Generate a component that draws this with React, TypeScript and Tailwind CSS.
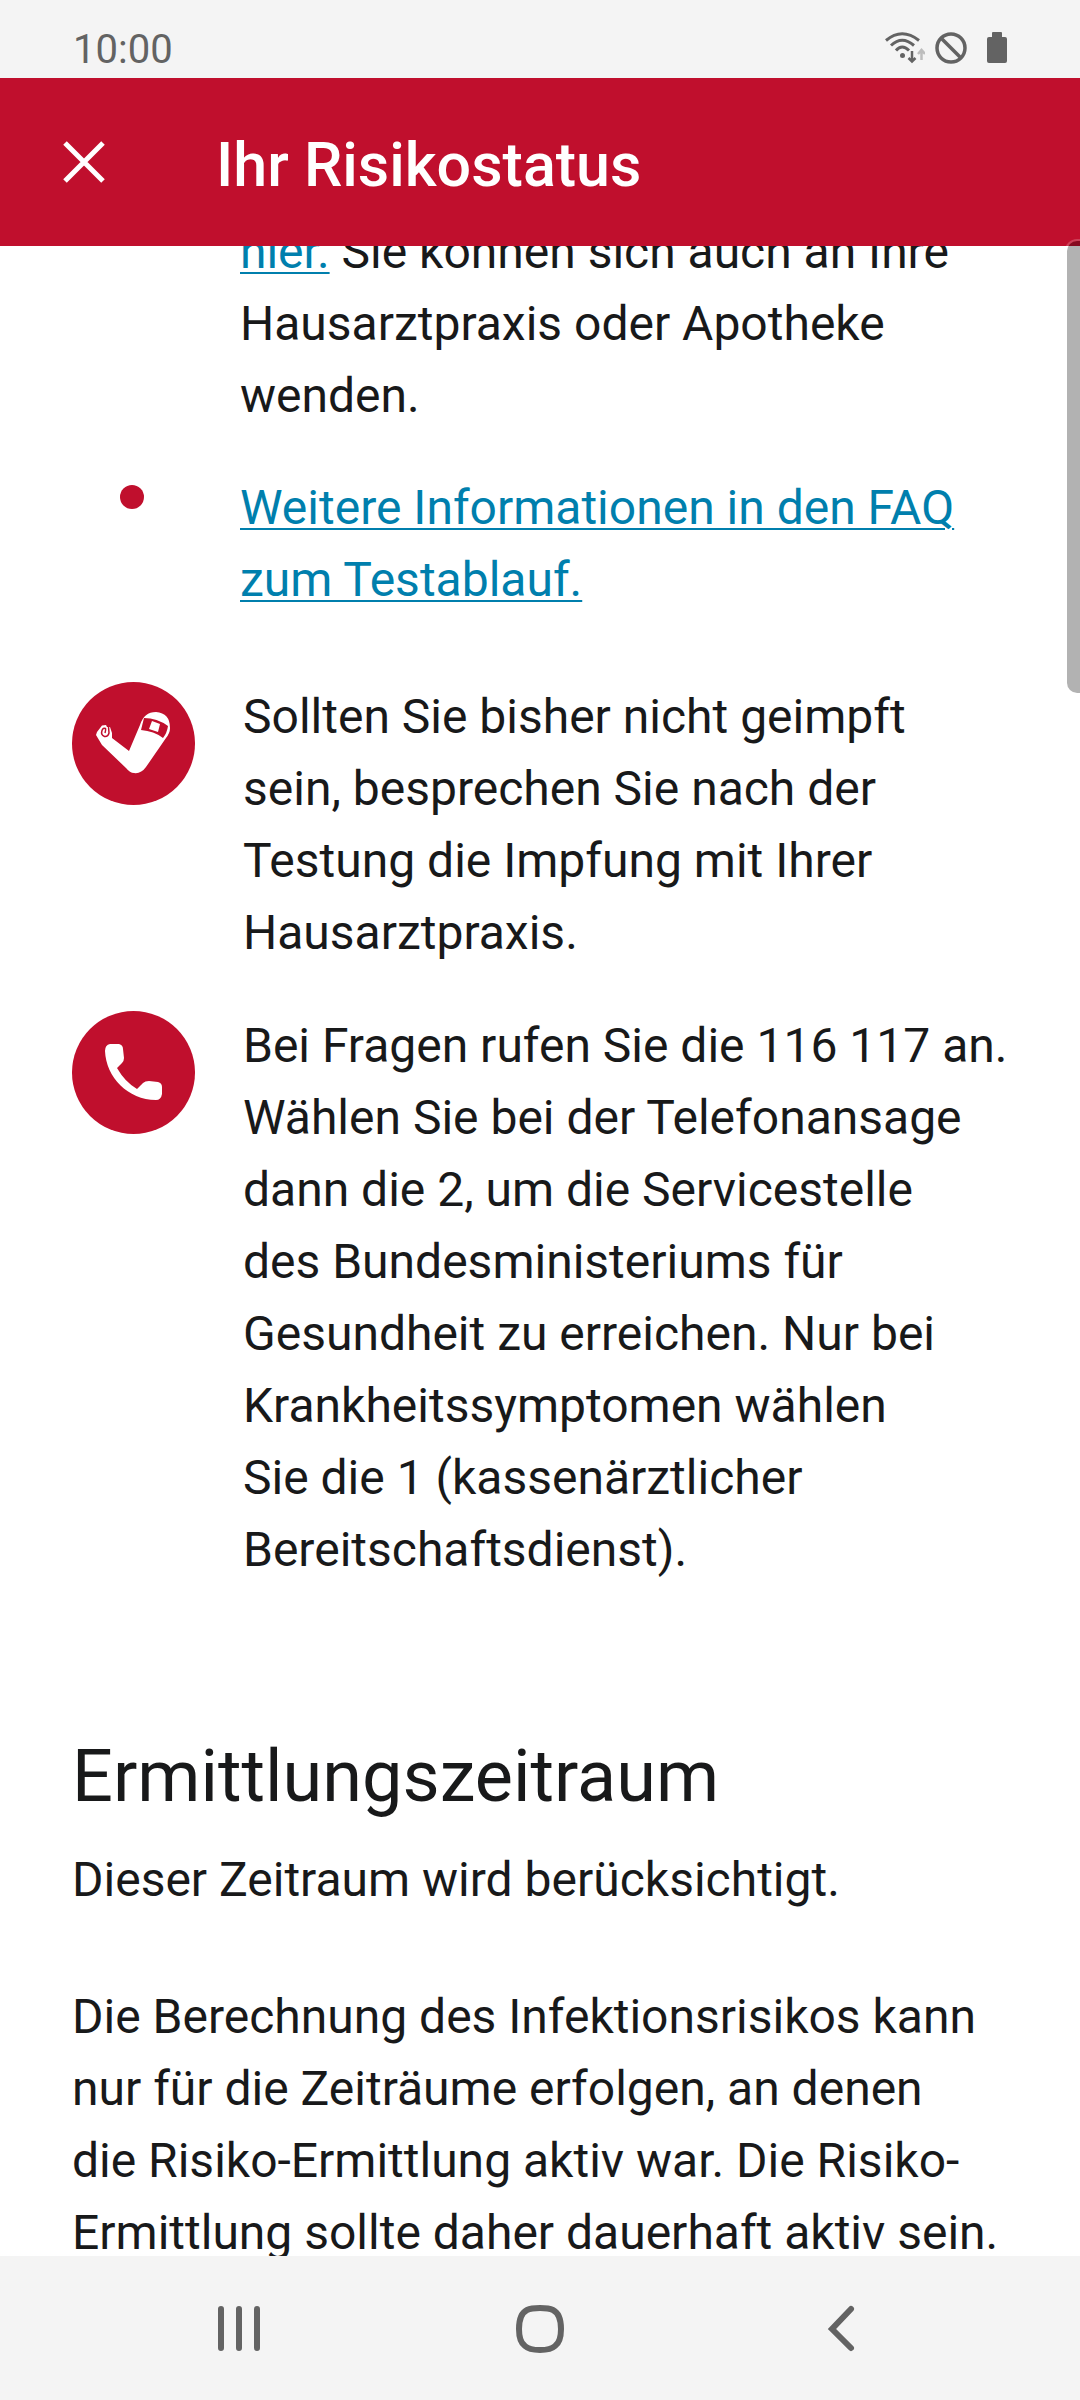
import React, { Fragment } from "react";

function Lines({ lines }: { lines: string[] }) {
  return (
    <>
      {lines.map((line, i) => (
        <Fragment key={line}>
          {i > 0 && <br />}
          {line}
        </Fragment>
      ))}
    </>
  );
}

function StatusBar() {
  return (
    <div className="flex h-[78px] shrink-0 items-end justify-between bg-[#f4f4f4] pr-[61px] pl-[73px] text-[#636363]">
      <span className="pb-1 text-[40px] leading-[48px]">10:00</span>
      <div className="flex items-end gap-2 pb-3.5">
        <svg width="42" height="34" viewBox="0 0 42 34" fill="none" aria-label="WLAN">
          <g stroke="currentColor" strokeWidth="3">
            <path d="M3 10.500Q19 -3 36 10.500" />
            <path d="M8 15.500Q19 5 31 15.500" />
            <path d="M13 20.500Q19 13.500 26 20.500" />
          </g>
          <circle cx="19.500" cy="25.500" r="2.500" fill="currentColor" />
          <path d="M29 21v10M25.500 28l3.500 3.500 3.500-3.500" stroke="currentColor" strokeWidth="2.500" />
          <path d="M38.500 30v-9M35 24l3.500-4 3.500 4" stroke="#bdbdbd" strokeWidth="2.500" />
        </svg>
        <svg width="34" height="34" viewBox="0 0 34 34" fill="none" stroke="currentColor" strokeWidth="3.500" aria-label="Nicht stören">
          <circle cx="18" cy="18" r="14" />
          <path d="M8 8l20 20" />
        </svg>
        <svg width="44" height="34" viewBox="0 0 44 34" fill="currentColor" aria-label="Akku">
          <path d="M18 2h8q1 0 1 1v4h3q2 0 2 2v22q0 2-2 2H14q-2 0-2-2V9q0-2 2-2h3V3q0-1 1-1z" />
        </svg>
      </div>
    </div>
  );
}

function ArmIcon() {
  return (
    <svg viewBox="0 0 123 123" className="size-full" aria-hidden="true">
      <path
        d="M57 69L68 43Q72 30 84 30Q98 31 98 46Q98 51 94 56L74 85Q69 92 62 91Q58 91 54 86L30 63L24 53L25 50L30 43.500L34 43L35 45L38 45L40 51L40 56Z"
        fill="#fff"
      />
      <path d="M72 36Q85 36 96 44Q95 51 91 56Q82 49 69 48Z" fill="#c00f2d" />
      <path d="M80 39L88 42L86 50L77 47Z" fill="#fff" />
      <path
        d="M36.500 44.500L37 51Q36 55 32.500 54.500Q28.500 53 30 48.500Q31 45.500 33.500 46.500Q34 48 33 51"
        fill="none"
        stroke="#c00f2d"
        strokeWidth="1.500"
      />
    </svg>
  );
}

function PhoneIcon() {
  return (
    <svg viewBox="0 0 123 123" className="size-full" fill="#fff" aria-hidden="true">
      <path d="M38 33H47Q51 34 51 38L52 47Q52 50 50 52L45 57Q53 71 65 78L71 72Q73 70 77 70L86 71Q90 72 90 76V83Q89 89 84 89C56 89 34 66 33 40Q33 34 38 33Z" />
    </svg>
  );
}

function Advice({ icon, lines }: { icon: React.ReactNode; lines: string[] }) {
  return (
    <div className="flex items-start gap-12">
      <div className="mt-px size-[123px] shrink-0 rounded-full bg-[#c00f2d]">{icon}</div>
      <p>
        <Lines lines={lines} />
      </p>
    </div>
  );
}

export default function App() {
  return (
    <div className="relative flex h-screen flex-col overflow-hidden bg-white font-['Roboto',sans-serif] text-[#18191a]">
      <StatusBar />
      <header className="flex h-[168px] shrink-0 items-center bg-[#c00f2d] px-12 pt-1.5 text-white">
        <button aria-label="Schließen" className="size-[72px]">
          <svg viewBox="0 0 72 72" fill="none" stroke="currentColor" strokeWidth="5" aria-hidden="true">
            <path d="M17 14l38 38M55 14L17 52" />
          </svg>
        </button>
        <h1 className="ml-24 text-[61px] leading-[72px] font-medium">Ihr Risikostatus</h1>
      </header>

      <main className="min-h-0 flex-1 overflow-hidden text-[48px] leading-[72px]">
        <div className="-mt-[30px] px-[72px]">
          <ul className="flex flex-col gap-10">
            <li className="pl-[168px]">
              <a href="#test" className="text-[#007fad] underline decoration-2 underline-offset-4">hier.</a>
              {" Sie können sich auch an Ihre"}
              <br />
              <Lines lines={["Hausarztpraxis oder Apotheke", "wenden."]} />
            </li>
            <li className="flex items-start pl-12">
              <span className="mt-[13px] mr-24 size-6 shrink-0 rounded-full bg-[#c00f2d]" />
              <a href="#faq" className="text-[#007fad] underline decoration-2 underline-offset-4">
                <Lines lines={["Weitere Informationen in den FAQ", "zum Testablauf."]} />
              </a>
            </li>
          </ul>
          <div className="mt-[65px] flex flex-col gap-[41px]">
            <Advice
              icon={<ArmIcon />}
              lines={[
                "Sollten Sie bisher nicht geimpft",
                "sein, besprechen Sie nach der",
                "Testung die Impfung mit Ihrer",
                "Hausarztpraxis.",
              ]}
            />
            <Advice
              icon={<PhoneIcon />}
              lines={[
                "Bei Fragen rufen Sie die 116 117 an.",
                "Wählen Sie bei der Telefonansage",
                "dann die 2, um die Servicestelle",
                "des Bundesministeriums für",
                "Gesundheit zu erreichen. Nur bei",
                "Krankheitssymptomen wählen",
                "Sie die 1 (kassenärztlicher",
                "Bereitschaftsdienst).",
              ]}
            />
          </div>
          <section>
            <h2 className="mt-[143px] text-[72px] leading-[96px]">Ermittlungszeitraum</h2>
            <p className="mt-[19px]">Dieser Zeitraum wird berücksichtigt.</p>
            <p className="mt-[65px]">
              <Lines
                lines={[
                  "Die Berechnung des Infektionsrisikos kann",
                  "nur für die Zeiträume erfolgen, an denen",
                  "die Risiko-Ermittlung aktiv war. Die Risiko-",
                  "Ermittlung sollte daher dauerhaft aktiv sein.",
                ]}
              />
            </p>
          </section>
        </div>
      </main>

      <nav className="flex h-36 shrink-0 items-center justify-around bg-[#f4f4f4] px-[88px] text-[#636363]">
        <button aria-label="Letzte Apps" className="size-[72px]">
          <svg viewBox="0 0 72 72" fill="none" stroke="currentColor" strokeWidth="6" strokeLinecap="round" aria-hidden="true">
            <path d="M18 17v39M36 17v39M54 17v39" />
          </svg>
        </button>
        <button aria-label="Startseite" className="size-[72px]">
          <svg viewBox="0 0 72 72" fill="none" stroke="currentColor" strokeWidth="6" aria-hidden="true">
            <path d="M36 16Q45 16 49 18Q57 22 57 37Q57 50 51 54Q47 58 36 58Q25 58 21 54Q15 50 15 37Q15 22 23 18Q27 16 36 16Z" />
          </svg>
        </button>
        <button aria-label="Zurück" className="size-[72px]">
          <svg viewBox="0 0 72 72" fill="none" stroke="currentColor" strokeWidth="6" strokeLinecap="round" aria-hidden="true">
            <path d="M46 17L27 37l19 19" />
          </svg>
        </button>
      </nav>

      <div className="absolute top-[239px] right-0 h-[456px] w-[15px] rounded-l-xl border-2 border-r-0 border-white/20 bg-black/30 bg-clip-padding" />
    </div>
  );
}
